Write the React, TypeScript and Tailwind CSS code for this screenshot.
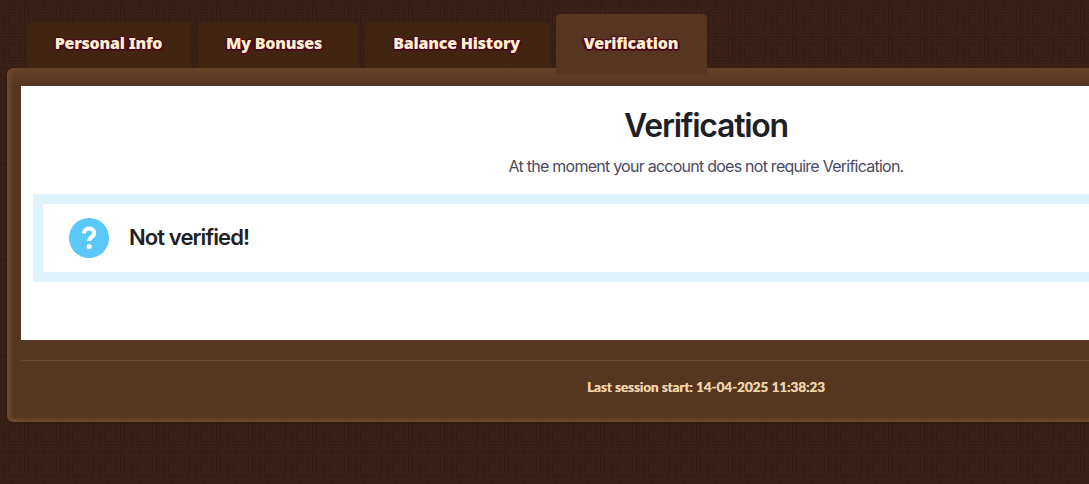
const tabs = [
  { label: "Personal Info", w: "w-[164px] pr-[1px]" },
  { label: "My Bonuses", w: "w-[160px] pr-[8px]" },
  { label: "Balance History", w: "w-[185px] pr-[2px]" },
];

const tabText =
  "font-['Noto_Sans',sans-serif] font-black text-[16px] tracking-[-0.22px] leading-none text-[#ffefcc] [text-shadow:0_2px_0_#4d0a1e,1px_1px_0_#4d0a1e,-1px_1px_0_#4d0a1e,1px_-1px_0_#4d0a1e,-1px_-1px_0_#4d0a1e,2px_1px_1px_#4d0a1e,-2px_1px_1px_#4d0a1e]";

function Texture() {
  return (
    <svg className="absolute inset-0" width="1089" height="484">
      <defs>
        <pattern id="key" width="32" height="32" patternUnits="userSpaceOnUse">
          <path
            d="M0 4.5H28.5V28.5H8.5V12.5H20.5V20.5M0 12.5H4.5V32M12.5 0V4.5M0 20.5H4.5M24.5 4.5V24.5"
            fill="none"
            stroke="#000"
            strokeOpacity="0.12"
          />
        </pattern>
        <pattern id="fine" width="3" height="3" patternUnits="userSpaceOnUse">
          <path d="M0 .5H3M.5 0V3" fill="none" stroke="#000" strokeOpacity="0.05" />
        </pattern>
      </defs>
      <rect width="1089" height="484" fill="url(#key)" />
      <rect width="1089" height="484" fill="url(#fine)" />
    </svg>
  );
}

export default function App() {
  return (
    <div className="relative w-[1089px] h-[484px] overflow-hidden bg-[#3c2216] font-['Inter',sans-serif]">
      <Texture />
      <div className="relative pt-[14px] pl-[7px]">
        <div className="flex items-end gap-[7px] pl-[20px] h-[54px]">
          {tabs.map((t) => (
            <div
              key={t.label}
              className={`${t.w} h-[46px] shrink-0 rounded-t-[4px] bg-[#412511] flex items-start justify-center pt-[13px]`}
            >
              <span className={tabText}>{t.label}</span>
            </div>
          ))}
          <div className="relative z-10 w-[151px] h-[61px] -mb-[7px] -ml-[1px] pr-[1px] shrink-0 rounded-t-[5px] bg-[#563620] flex items-start justify-center pt-[21px]">
            <span className={tabText}>Verification</span>
          </div>
        </div>
        <div className="w-[1398px] h-[354px] rounded-[6px] bg-[#553621] bg-[linear-gradient(180deg,#654229_0px,#553621_18px)] shadow-[inset_0_-4px_3px_-1px_#6d4a2c,inset_5px_0_4px_-1px_#6d4a2c,0_1px_2px_rgba(0,0,0,0.3)] pt-[18px] px-[14px]">
          <div className="w-[1370px] h-[254px] bg-white pt-[21px] px-[12px] flex flex-col">
            <h1 className="text-center text-[32px] leading-[38px] font-semibold tracking-[-1.25px] text-[#1f1f27]">
              Verification
            </h1>
            <p className="text-center mt-[11px] text-[16px] leading-[20px] tracking-[-0.75px] text-[#4a4a5e]">
              At the moment your account does not require Verification.
            </p>
            <div className="mt-[18px] h-[88px] border-[10px] border-[#dff3fd] bg-white flex items-center gap-[20px] pl-[26px]">
              <svg width="40" height="40" viewBox="0 0 40 40" className="shrink-0">
                <circle cx="20" cy="20" r="20" fill="#5ac8fa" />
                <path
                  d="M15 15.6c0-3 2.2-5.2 5.2-5.2 2.9 0 5 1.9 5 4.5 0 2-1 3.1-2.6 4.3-1.6 1.1-2.4 2-2.4 3.9"
                  fill="none"
                  stroke="#fff"
                  strokeWidth="4"
                />
                <circle cx="20.2" cy="28.6" r="2.6" fill="#fff" />
              </svg>
              <span className="text-[22px] leading-none font-semibold tracking-[-0.9px] -mt-[3px] text-[#1f1f27]">
                Not verified!
              </span>
            </div>
          </div>
          <div className="mt-[20px] w-[1370px] border-t border-[#6d4a2c] pt-[19px] text-center">
            <span className="font-['Lato',sans-serif] font-bold text-[13.4px] leading-[15px] block text-[#eed3ac] [text-shadow:0.3px_0_0_#eed3ac]">
              Last session start: 14-04-2025 11:38:23
            </span>
          </div>
        </div>
      </div>
    </div>
  );
}
